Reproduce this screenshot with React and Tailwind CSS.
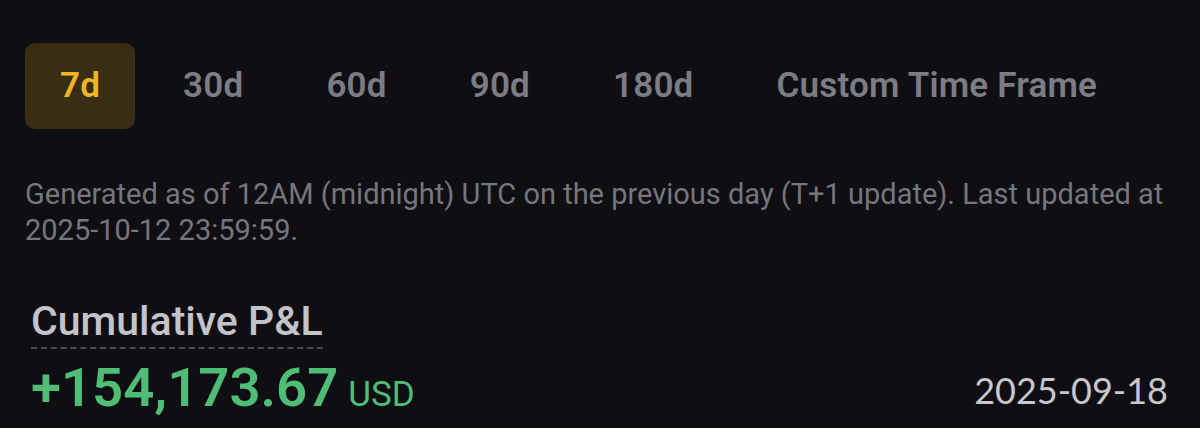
export default function App() {
  const tabs = ["7d", "30d", "60d", "90d", "180d", "Custom Time Frame"];
  const font = { fontFamily: "Roboto, 'Noto Sans', sans-serif" };
  return (
    <div className="w-[1200px] h-[428px] bg-[#0f0f13] overflow-hidden pl-[25px] pr-[28px] pt-[43px]" style={font}>
      <div className="flex items-center gap-[13px]">
        {tabs.map((t, i) => (
          <div
            key={t}
            className={
              "h-[86px] px-[35px] flex items-center rounded-[10px] text-[35px] font-semibold tracking-[0.2px] " +
              (i === 0 ? "bg-[#3a2d15] text-[#f0b429]" : "text-[#7c7c84]")
            }
          >
            {t}
          </div>
        ))}
      </div>
      <p className="mt-[47px] text-[29px] leading-[36px] text-[#76767e]">
        Generated as of 12AM (midnight) UTC on the previous day (T+1 update). Last updated at 2025-10-12 23:59:59.
      </p>
      <div className="mt-[50px] pl-[6px] pr-[4px]">
        <div className="inline-block text-[41px] leading-[46px] font-medium text-[#c3c3ca] border-b-2 border-dashed border-[#4a4a50] pb-[3px]">
          Cumulative P&amp;L
        </div>
        <div className="flex items-center justify-between mt-[13px] h-[56px]">
          <div className="flex items-baseline gap-[10px]">
            <span className="text-[54.5px] leading-[56px] font-semibold text-[#4fbd76]">+154,173.67</span>
            <span className="text-[35px] text-[#4fbd76]">USD</span>
          </div>
          <div className="text-[36px] leading-[48px] text-[#c7c7cd]" style={{ fontFamily: "Lato, sans-serif" }}>
            2025-09-18
          </div>
        </div>
      </div>
    </div>
  );
}
